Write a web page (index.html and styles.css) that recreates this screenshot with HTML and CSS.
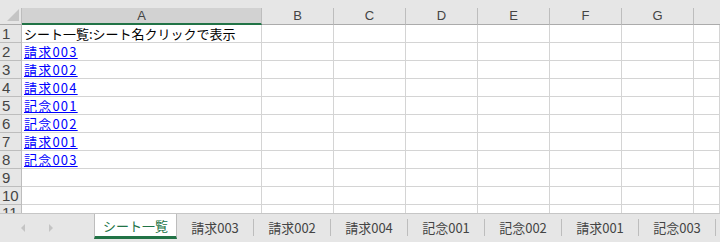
FILE: index.html
```html
<!DOCTYPE html>
<html lang="ja">
<head>
    <meta charset="UTF-8">
    <title>シート一覧</title>
    <link rel="stylesheet" href="styles.css">
</head>
<body>
    <div class="sheet">
        <div class="topstrip"></div>

        <div class="corner">
            <svg width="14" height="14" viewBox="0 0 14 14"><polygon points="13,1 13,13 1,13" fill="#c4c4c4"/></svg>
        </div>
        <div class="colhead selected">A</div>
        <div class="colhead">B</div>
        <div class="colhead">C</div>
        <div class="colhead">D</div>
        <div class="colhead">E</div>
        <div class="colhead">F</div>
        <div class="colhead">G</div>
        <div class="colhead last"></div>

        <div class="rowhead">1</div>
        <div class="cell">シート一覧:シート名クリックで表示</div>
        <div class="cell"></div><div class="cell"></div><div class="cell"></div><div class="cell"></div><div class="cell"></div><div class="cell"></div><div class="cell"></div>

        <div class="rowhead">2</div>
        <div class="cell"><a href="#">請求003</a></div>
        <div class="cell"></div><div class="cell"></div><div class="cell"></div><div class="cell"></div><div class="cell"></div><div class="cell"></div><div class="cell"></div>

        <div class="rowhead">3</div>
        <div class="cell"><a href="#">請求002</a></div>
        <div class="cell"></div><div class="cell"></div><div class="cell"></div><div class="cell"></div><div class="cell"></div><div class="cell"></div><div class="cell"></div>

        <div class="rowhead">4</div>
        <div class="cell"><a href="#">請求004</a></div>
        <div class="cell"></div><div class="cell"></div><div class="cell"></div><div class="cell"></div><div class="cell"></div><div class="cell"></div><div class="cell"></div>

        <div class="rowhead">5</div>
        <div class="cell"><a href="#">記念001</a></div>
        <div class="cell"></div><div class="cell"></div><div class="cell"></div><div class="cell"></div><div class="cell"></div><div class="cell"></div><div class="cell"></div>

        <div class="rowhead">6</div>
        <div class="cell"><a href="#">記念002</a></div>
        <div class="cell"></div><div class="cell"></div><div class="cell"></div><div class="cell"></div><div class="cell"></div><div class="cell"></div><div class="cell"></div>

        <div class="rowhead">7</div>
        <div class="cell"><a href="#">請求001</a></div>
        <div class="cell"></div><div class="cell"></div><div class="cell"></div><div class="cell"></div><div class="cell"></div><div class="cell"></div><div class="cell"></div>

        <div class="rowhead">8</div>
        <div class="cell"><a href="#">記念003</a></div>
        <div class="cell"></div><div class="cell"></div><div class="cell"></div><div class="cell"></div><div class="cell"></div><div class="cell"></div><div class="cell"></div>

        <div class="rowhead">9</div>
        <div class="cell"></div>
        <div class="cell"></div><div class="cell"></div><div class="cell"></div><div class="cell"></div><div class="cell"></div><div class="cell"></div><div class="cell"></div>

        <div class="rowhead">10</div>
        <div class="cell"></div>
        <div class="cell"></div><div class="cell"></div><div class="cell"></div><div class="cell"></div><div class="cell"></div><div class="cell"></div><div class="cell"></div>

        <div class="rowhead cut">11</div>
        <div class="cell cut"></div>
        <div class="cell cut"></div><div class="cell cut"></div><div class="cell cut"></div><div class="cell cut"></div><div class="cell cut"></div><div class="cell cut"></div><div class="cell cut"></div>
    </div>

    <div class="tabbar">
        <div class="nav">
            <svg width="6" height="8" viewBox="0 0 6 8"><polygon points="5,0 5,8 1,4" fill="#c4c4c4"/></svg>
            <svg width="6" height="8" viewBox="0 0 6 8"><polygon points="1,0 1,8 5,4" fill="#c4c4c4"/></svg>
        </div>
        <div class="tab active">シート一覧</div>
        <div class="tab">請求003</div>
        <div class="tab">請求002</div>
        <div class="tab">請求004</div>
        <div class="tab">記念001</div>
        <div class="tab">記念002</div>
        <div class="tab">請求001</div>
        <div class="tab">記念003</div>
    </div>
</body>
</html>
```

FILE: styles.css
```css
body {
    margin: 0;
    width: 720px;
    height: 242px;
    overflow: hidden;
    background: #ffffff;
    font-family: "Noto Sans CJK JP", "Liberation Sans", sans-serif;
}

.sheet {
    display: grid;
    grid-template-columns: 22px 240px repeat(6, 72px) 1fr;
    grid-template-rows: 8px 17px repeat(10, 18px) 8px;
    height: 213px;
    overflow: hidden;
}

.topstrip {
    grid-column: 1 / -1;
    background: #e6e6e6;
}

.corner {
    background: #e6e6e6;
    border-right: 1px solid #bdbdbd;
    border-bottom: 1px solid #ababab;
    display: flex;
    align-items: flex-end;
    justify-content: flex-end;
    padding: 0 1px 2px 0;
}

.colhead {
    background: #e6e6e6;
    border-right: 1px solid #bdbdbd;
    border-bottom: 1px solid #ababab;
    color: #444444;
    font-family: "Liberation Sans", sans-serif;
    font-size: 13px;
    line-height: 16px;
    text-align: center;
}

.colhead.selected {
    background: #d2d2d2;
    border-bottom: 2px solid #217346;
    line-height: 15px;
}

.colhead.last {
    border-right: none;
}

.rowhead {
    background: #e6e6e6;
    border-right: 1px solid #bdbdbd;
    border-bottom: 1px solid #bdbdbd;
    color: #444444;
    font-family: "Liberation Sans", sans-serif;
    font-size: 15px;
    line-height: 17px;
    padding-left: 2px;
    overflow: hidden;
}

.cell {
    border-right: 1px solid #d4d4d4;
    border-bottom: 1px solid #d4d4d4;
    font-size: 13px;
    line-height: 16px;
    padding: 1px 0 0 2px;
    white-space: nowrap;
    overflow: hidden;
    color: #000000;
}

.cut {
    border-bottom: none;
}

.rowhead.cut {
    line-height: 15px;
}

.cell a {
    color: #0000ff;
    text-decoration: underline;
    letter-spacing: 1.2px;
}

.tabbar {
    height: 29px;
    background: #e6e6e6;
    border-top: 1px solid #c6c6c6;
    box-sizing: border-box;
    display: flex;
    align-items: flex-start;
}

.nav {
    width: 94px;
    height: 28px;
    display: flex;
    align-items: center;
    gap: 22px;
    padding-left: 20px;
    box-sizing: border-box;
}

.tab {
    width: 77px;
    box-sizing: border-box;
    height: 17px;
    margin-top: 5px;
    font-size: 13px;
    line-height: 17px;
    text-align: center;
    color: #444444;
    border-right: 1px solid #bdbdbd;
    white-space: nowrap;
}

.active {
    width: 83px;
    margin-top: 0;
    height: 25px;
    line-height: 24px;
    background: #ffffff;
    color: #217346;
    border-left: 1px solid #bdbdbd;
    border-bottom: 3px solid #217346;
}
```
